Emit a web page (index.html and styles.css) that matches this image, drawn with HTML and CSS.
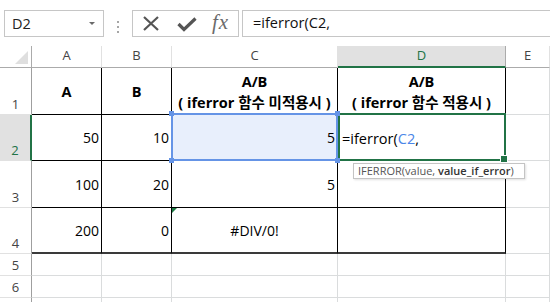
FILE: index.html
```html
<!DOCTYPE html>
<html>
	<head>
		<meta charset="UTF-8">
		<title></title>
		<link rel="stylesheet" href="styles.css">
	</head>
	<body>
		<div class="toolbar">
			<div class="namebox">
				<span class="name">D2</span>
				<span class="caret"></span>
			</div>
			<div class="grip"><i></i><i></i><i></i></div>
			<div class="fxbox">
				<svg class="icon-x" width="18" height="15" viewBox="0 0 18 15">
					<path d="M2 1 L16 14 M16 1 L2 14" stroke="#555" stroke-width="2.2" fill="none"/>
				</svg>
				<svg class="icon-ok" width="20" height="15" viewBox="0 0 20 15">
					<path d="M1.5 7 L7 12.5 L18.5 1.5" stroke="#555" stroke-width="3.2" fill="none"/>
				</svg>
				<span class="fx">fx</span>
			</div>
			<div class="formula">=iferror(C2,</div>
		</div>

		<div class="sheet">
			<!-- column headers -->
			<div class="corner"></div>
			<div class="col">A</div>
			<div class="col">B</div>
			<div class="col">C</div>
			<div class="col col-on">D</div>
			<div class="col">E</div>

			<!-- row 1 -->
			<div class="rh">1</div>
			<div class="cell tb head">A</div>
			<div class="cell tb head">B</div>
			<div class="cell tb head two"><span>A/B</span><span>( iferror 함수 미적용시 )</span></div>
			<div class="cell tb head two"><span>A/B</span><span>( iferror 함수 적용시 )</span></div>
			<div class="cell"></div>

			<!-- row 2 -->
			<div class="rh rh-on">2</div>
			<div class="cell tb num">50</div>
			<div class="cell tb num">10</div>
			<div class="cell tb num ref">
				5
				<span class="refbox"><i class="h tl"></i><i class="h tr"></i><i class="h bl"></i><i class="h br"></i></span>
			</div>
			<div class="cell tb active">
				<span class="edit">=iferror(<b class="refc">C2</b>,</span>
				<div class="tip">IFERROR(value, <b>value_if_error</b>)</div>
			</div>
			<div class="cell"></div>

			<!-- row 3 -->
			<div class="rh">3</div>
			<div class="cell tb num">100</div>
			<div class="cell tb num">20</div>
			<div class="cell tb num">5</div>
			<div class="cell tb"></div>
			<div class="cell"></div>

			<!-- row 4 -->
			<div class="rh">4</div>
			<div class="cell tb num last">200</div>
			<div class="cell tb num last">0</div>
			<div class="cell tb center last err">#DIV/0!</div>
			<div class="cell tb last"></div>
			<div class="cell"></div>

			<!-- rows 5 - 7 -->
			<div class="rh">5</div>
			<div class="cell"></div>
			<div class="cell"></div>
			<div class="cell"></div>
			<div class="cell"></div>
			<div class="cell"></div>

			<div class="rh">6</div>
			<div class="cell"></div>
			<div class="cell"></div>
			<div class="cell"></div>
			<div class="cell"></div>
			<div class="cell"></div>

			<div class="rh"></div>
			<div class="cell"></div>
			<div class="cell"></div>
			<div class="cell"></div>
			<div class="cell"></div>
			<div class="cell"></div>
		</div>
	</body>
</html>
```

FILE: styles.css
```css
* {
	margin: 0;
	padding: 0;
	box-sizing: border-box;
}
body {
	width: 550px;
	height: 302px;
	overflow: hidden;
	background: #fff;
	font-family: "Open Sans", "Noto Sans CJK KR", sans-serif;
	color: #000;
}

/* formula bar */
.toolbar {
	display: flex;
	height: 46px;
	padding-top: 10px;
}
.namebox {
	display: flex;
	align-items: center;
	width: 100px;
	height: 27px;
	margin-left: 4px;
	border: 1px solid #c6c6c6;
	padding-left: 7px;
}
.name {
	font-size: 14.5px;
	color: #222;
	flex: 1;
}
.caret {
	width: 0;
	height: 0;
	border-left: 3px solid transparent;
	border-right: 3px solid transparent;
	border-top: 3px solid #6a6a6a;
	margin-right: 8px;
}
.grip {
	width: 28px;
	display: flex;
	flex-direction: column;
	align-items: center;
	justify-content: center;
	gap: 3px;
	padding-bottom: 2px;
}
.grip i {
	display: block;
	width: 2px;
	height: 2px;
	background: #a6a6a6;
}
.fxbox {
	display: flex;
	align-items: center;
	width: 107px;
	height: 27px;
	border: 1px solid #c6c6c6;
}
.icon-x {
	margin-left: 9px;
}
.icon-ok {
	margin-left: 17px;
	margin-top: 1px;
}
.fx {
	margin-left: 15px;
	font-family: "Liberation Serif", serif;
	font-style: italic;
	font-size: 21px;
	color: #6b6b6b;
	line-height: 1;
	margin-top: -2px;
	letter-spacing: 1px;
}
.formula {
	flex: 1;
	height: 27px;
	margin-left: 3px;
	border: 1px solid #c6c6c6;
	border-right: none;
	padding-left: 10px;
	font-size: 14.5px;
	line-height: 24px;
	color: #111;
}

/* grid */
.sheet {
	display: grid;
	grid-template-columns: 32px 70px 70px 166px 168px 1fr;
	grid-template-rows: 22px 47px 46px 47px 46px 22px 22px 22px;
}
.sheet > div {
	display: flex;
	align-items: center;
	border-right: 1px solid #dadcdd;
	border-bottom: 1px solid #dadcdd;
	font-size: 14px;
}
.corner {
	position: relative;
	border-right-color: #ababab !important;
	border-bottom-color: #ababab !important;
}
.corner::after {
	content: "";
	position: absolute;
	right: 3px;
	bottom: 3px;
	border-left: 13px solid transparent;
	border-bottom: 13px solid #dfdfdf;
}
.col {
	justify-content: center;
	font-size: 13px !important;
	color: #444;
	border-right-color: #e1e1e1 !important;
	border-bottom-color: #ababab !important;
	padding-bottom: 3px;
}
.col-on {
	background: #e1e1e1;
	color: #217346;
	border-bottom: 2px solid #217346 !important;
	border-right-color: #ababab !important;
}
.rh {
	justify-content: center;
	align-items: flex-end !important;
	font-size: 13px !important;
	color: #444;
	padding-bottom: 1px;
	border-right-color: #9f9f9f !important;
	border-bottom-color: #e1e1e1 !important;
}
.rh-on {
	background: #e1e1e1;
	color: #217346;
	border-right: 2px solid #217346 !important;
}
.cell {
	padding: 0 2px;
}
.tb {
	border-right-color: #000 !important;
	border-bottom-color: #000 !important;
}
.last {
	border-bottom: 2px solid #3a3a3a !important;
}
.num {
	justify-content: flex-end;
}
.center {
	justify-content: center;
}
.head {
	justify-content: center;
	font-weight: bold;
	font-size: 14.5px !important;
}
.two {
	flex-direction: column;
	line-height: 21px;
	padding-top: 1px;
}

/* referenced cell C2 */
.ref {
	position: relative;
	background: #e8effc;
}
.refbox {
	position: absolute;
	top: -2px;
	left: -1px;
	right: -1px;
	bottom: -1px;
	border: 2px solid #6594e6;
	z-index: 3;
}
.h {
	position: absolute;
	width: 5px;
	height: 5px;
	background: #6594e6;
}
.tl { left: -4px; top: -4px; }
.tr { right: -4px; top: -4px; }
.bl { left: -4px; bottom: -4px; }
.br { right: -4px; bottom: -4px; }

/* active cell D2 */
.active {
	position: relative;
	padding-left: 4px;
}
.active::before {
	content: "";
	position: absolute;
	top: -2px;
	left: 0;
	right: -1px;
	bottom: -1px;
	border: 2px solid #217346;
	z-index: 2;
}
.active::after {
	content: "";
	position: absolute;
	right: -3px;
	bottom: -3px;
	width: 6px;
	height: 6px;
	background: #217346;
	border: 1px solid #fff;
	z-index: 2;
}
.edit {
	font-size: 14.5px;
	padding-top: 1px;
}
.refc {
	font-weight: normal;
	color: #4a86e8;
}
.tip {
	position: absolute;
	left: 15px;
	top: calc(100% + 3px);
	width: 172px;
	height: 16px;
	background: #fff;
	border: 1px solid #c4c4c4;
	box-shadow: 1px 1px 2px rgba(0, 0, 0, 0.12);
	font-size: 11px;
	line-height: 14px;
	color: #555;
	padding-left: 4px;
	white-space: nowrap;
	z-index: 5;
}
.tip b {
	font-weight: 600;
	color: #333;
}

/* error indicator */
.err {
	position: relative;
}
.err::before {
	content: "";
	position: absolute;
	left: 0;
	top: 0;
	border-top: 5px solid #1e7b45;
	border-right: 5px solid transparent;
}
```
